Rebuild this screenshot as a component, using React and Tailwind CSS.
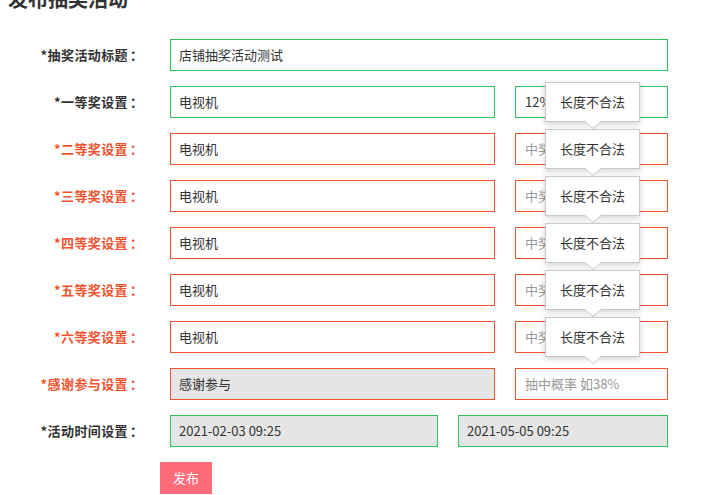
import React from "react";

const prizes = [
  { label: "*一等奖设置", ok: true, name: "电视机", rate: "12%" },
  { label: "*二等奖设置", ok: false, name: "电视机", rate: "" },
  { label: "*三等奖设置", ok: false, name: "电视机", rate: "" },
  { label: "*四等奖设置", ok: false, name: "电视机", rate: "" },
  { label: "*五等奖设置", ok: false, name: "电视机", rate: "" },
  { label: "*六等奖设置", ok: false, name: "电视机", rate: "" },
];

function Tip() {
  return (
    <div className="absolute left-[29px] top-[-5px] z-10 w-[95px] h-[40px] bg-white border border-[#c9c9c9] shadow-[0_2px_6px_rgba(0,0,0,0.18)] flex items-center justify-center text-[13px] text-[#333]">
      长度不合法
      <span className="absolute left-[38px] bottom-[-8px] w-0 h-0 border-x-[9px] border-x-transparent border-t-[8px] border-t-[#c9c9c9]"></span>
      <span className="absolute left-[39px] bottom-[-7px] w-0 h-0 border-x-[8px] border-x-transparent border-t-[7px] border-t-white"></span>
    </div>
  );
}

function Label({ text, ok }) {
  return (
    <div
      className={
        "w-[141px] shrink-0 flex justify-end text-[13px] font-bold tracking-[0.4px] " +
        (ok ? "text-[#333]" : "text-[#f0542e]")
      }
    >
      <span>{text}</span>
      <span className="w-[13px] pl-[2px]">：</span>
    </div>
  );
}

export default function App() {
  return (
    <div
      className="min-h-screen bg-white overflow-hidden text-[13px] text-[#333]"
      style={{ fontFamily: '"Noto Sans CJK SC", "Noto Sans", sans-serif' }}
    >
      <h1 className="-mt-[15px] ml-[8px] text-[20px] font-bold leading-[28px] text-[#333]">
        发布抽奖活动
      </h1>

      <div className="mt-[26px] flex flex-col gap-[15px]">
        <div className="flex items-center">
          <Label text="*抽奖活动标题" ok />
          <div className="ml-[29px] w-[498px] h-[32px] border border-[#2ec35c] flex items-center px-[8px]">
            店铺抽奖活动测试
          </div>
        </div>

        {prizes.map((p, i) => (
          <div key={i} className="flex items-center">
            <Label text={p.label} ok={p.ok} />
            <div
              className={
                "ml-[29px] w-[325px] h-[32px] border flex items-center px-[8px] " +
                (p.ok ? "border-[#2ec35c]" : "border-[#f0542e]")
              }
            >
              {p.name}
            </div>
            <div
              className={
                "relative ml-[20px] w-[153px] h-[32px] border flex items-center px-[9px] " +
                (p.ok ? "border-[#2ec35c]" : "border-[#f0542e]")
              }
            >
              {p.rate ? (
                <span>{p.rate}</span>
              ) : (
                <span className="text-[#999]">中奖概率 如38%</span>
              )}
              <Tip />
            </div>
          </div>
        ))}

        <div className="flex items-center">
          <Label text="*感谢参与设置" />
          <div className="ml-[29px] w-[325px] h-[32px] border border-[#f0542e] bg-[#e5e5e5] flex items-center px-[8px]">
            感谢参与
          </div>
          <div className="ml-[20px] w-[153px] h-[32px] border border-[#f0542e] flex items-center px-[9px] text-[#999]">
            抽中概率 如38%
          </div>
        </div>

        <div className="flex items-center">
          <Label text="*活动时间设置" ok />
          <div className="ml-[29px] w-[268px] h-[32px] border border-[#2ec35c] bg-[#e5e5e5] flex items-center px-[8px]">
            2021-02-03 09:25
          </div>
          <div className="ml-[20px] w-[210px] h-[32px] border border-[#2ec35c] bg-[#e5e5e5] flex items-center px-[8px]">
            2021-05-05 09:25
          </div>
        </div>

        <div className="pl-[160px]">
          <button className="w-[52px] h-[32px] bg-[#ff6b77] text-white text-[13px]">
            发布
          </button>
        </div>
      </div>
    </div>
  );
}
